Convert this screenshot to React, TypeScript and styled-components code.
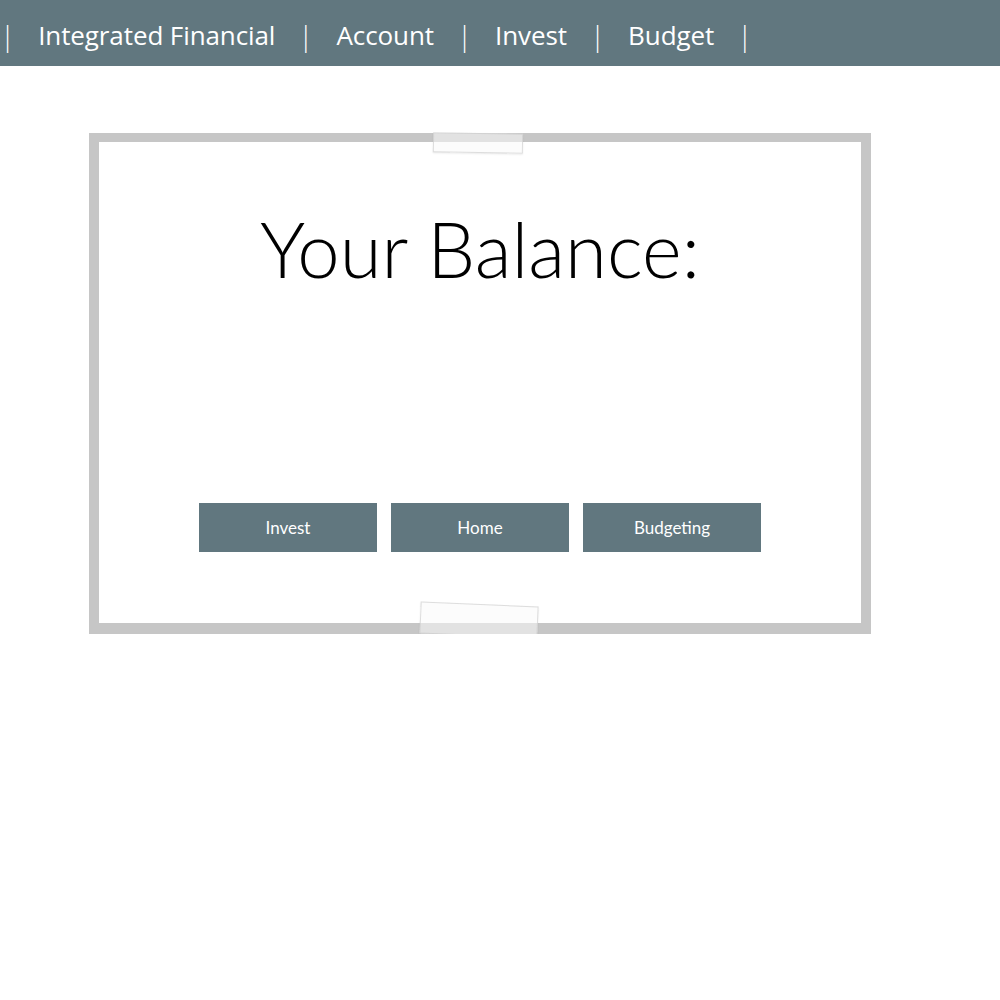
import React from "react";
import styled, { createGlobalStyle } from "styled-components";

const GlobalStyle = createGlobalStyle`
  body {
    margin: 0;
    background: #ffffff;
    font-family: "Open Sans", "Noto Sans", sans-serif;
  }
`;

const navItems = ["Integrated Financial", "Account", "Invest", "Budget"];
const buttons = ["Invest", "Home", "Budgeting"];

const App: React.FC = () => {
  return (
    <>
      <GlobalStyle />
      <Header>
        <Sep>|</Sep>
        {navItems.map((item) => (
          <React.Fragment key={item}>
            <NavLink>{item}</NavLink>
            <Sep>|</Sep>
          </React.Fragment>
        ))}
      </Header>
      <Frame>
        <Tape $top />
        <Title>Your Balance:</Title>
        <ButtonRow>
          {buttons.map((b) => (
            <Button key={b}>{b}</Button>
          ))}
        </ButtonRow>
        <Tape />
      </Frame>
    </>
  );
};

const Header = styled.nav`
  height: 66px;
  background: #61777f;
  display: flex;
  align-items: center;
  padding-left: 0;
  gap: 23px;
  color: #ffffff;
  font-family: "Open Sans", "Noto Sans", sans-serif;
  font-size: 26px;
  line-height: 1;
  padding-top: 3px;
  box-sizing: border-box;
`;

const NavLink = styled.span`
  letter-spacing: -0.1px;
`;

const Sep = styled.span`
  font-weight: 300;
  font-size: 28px;
`;

const Frame = styled.section`
  position: relative;
  margin: 67px 0 0 89px;
  width: 782px;
  height: 501px;
  box-sizing: border-box;
  border: 10px solid #c6c6c6;
  border-top-width: 9px;
  border-bottom-width: 11px;
  display: flex;
  flex-direction: column;
  align-items: center;
`;

const Tape = styled.div<{ $top?: boolean }>`
  position: absolute;
  left: ${(p) => (p.$top ? "334px" : "321px")};
  top: ${(p) => (p.$top ? "-9px" : "462px")};
  width: ${(p) => (p.$top ? "88px" : "116px")};
  height: ${(p) => (p.$top ? "18px" : "30px")};
  background: rgba(250, 250, 250, 0.55);
  border: 1px solid rgba(200, 200, 200, 0.6);
  box-shadow: 0 1px 2px rgba(0, 0, 0, 0.08);
  transform: rotate(${(p) => (p.$top ? "1deg" : "2.5deg")});
`;

const Title = styled.h1`
  margin: 69px 0 0;
  font-family: "Lato", "Open Sans", sans-serif;
  font-weight: 300;
  font-size: 76px;
  line-height: 1;
  color: #000000;
`;

const ButtonRow = styled.div`
  display: flex;
  gap: 14px;
  margin-top: 216px;
`;

const Button = styled.button`
  width: 178px;
  height: 49px;
  border: none;
  background: #61777f;
  color: #ffffff;
  font-family: "Lato", "Noto Sans", sans-serif;
  font-size: 17px;
  cursor: pointer;
`;

export default App;
